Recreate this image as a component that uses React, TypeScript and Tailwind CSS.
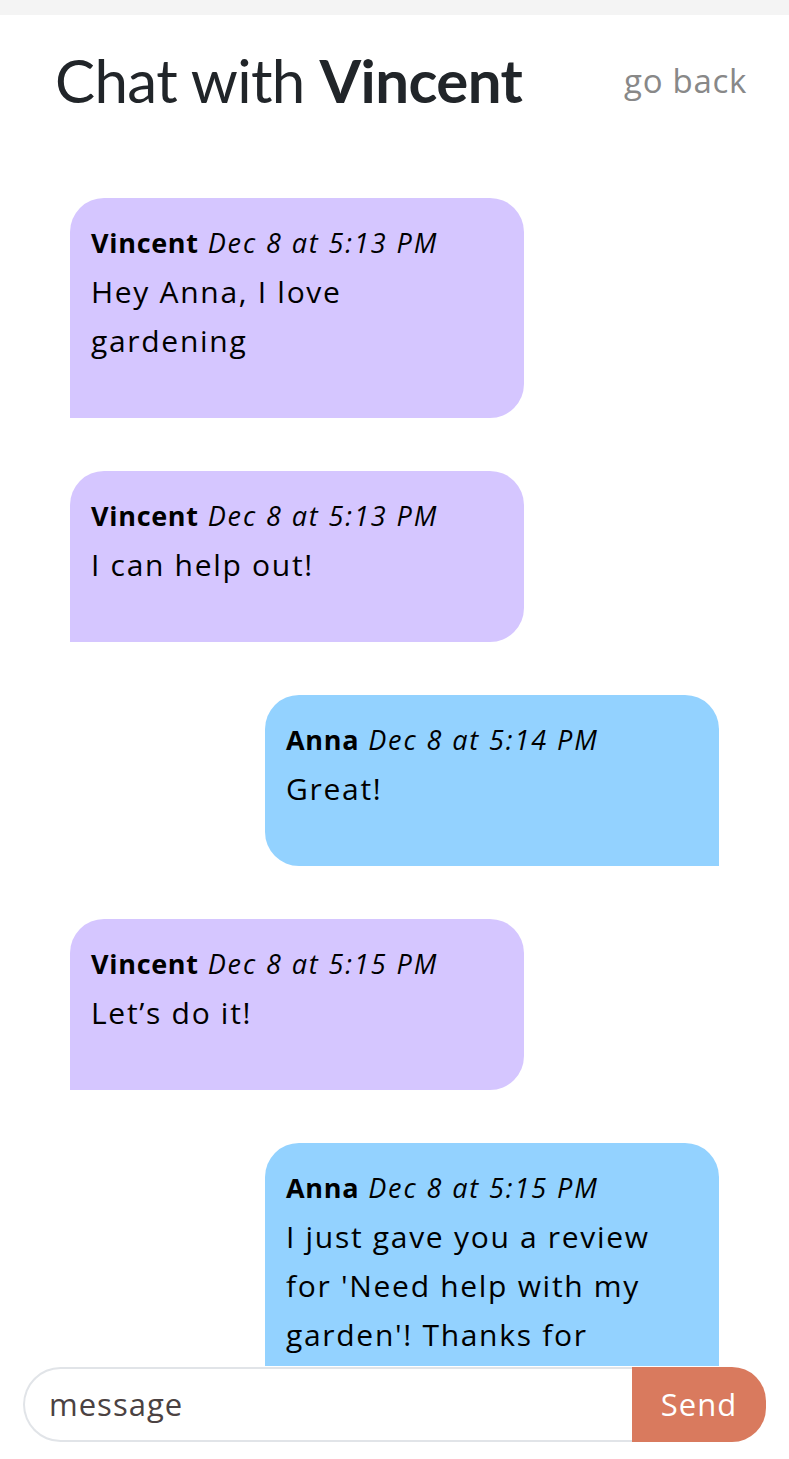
type Message = {
  author: string;
  time: string;
  text: string;
  mine: boolean;
};

const messages: Message[] = [
  { author: "Vincent", time: "Dec 8 at 5:13 PM", text: "Hey Anna, I love gardening", mine: false },
  { author: "Vincent", time: "Dec 8 at 5:13 PM", text: "I can help out!", mine: false },
  { author: "Anna", time: "Dec 8 at 5:14 PM", text: "Great!", mine: true },
  { author: "Vincent", time: "Dec 8 at 5:15 PM", text: "Let\u2019s do it!", mine: false },
  {
    author: "Anna",
    time: "Dec 8 at 5:15 PM",
    text: "I just gave you a review for 'Need help with my garden'! Thanks for everything!",
    mine: true,
  },
];

const Bubble = ({ msg }: { msg: Message }) => {
  return (
    <div
      className={
        msg.mine
          ? "self-end w-[454px] shrink-0 bg-[#93d2ff] rounded-t-[34px] rounded-bl-[34px] px-[21px] pt-[29px] pb-[53px]"
          : "self-start w-[454px] shrink-0 bg-[#d5c6ff] rounded-t-[34px] rounded-br-[34px] px-[21px] pt-[29px] pb-[53px]"
      }
    >
      <div className="text-[27px] leading-[32px] tracking-[1.9px] text-black">
        <span className="font-bold tracking-[0.7px]">{msg.author}</span>{" "}
        <span className="italic">{msg.time}</span>
      </div>
      <p className="text-[30px] leading-[49px] tracking-[1.7px] text-black mt-[8px]">{msg.text}</p>
    </div>
  );
};

export default function App() {
  return (
    <div
      className="h-screen flex flex-col bg-white overflow-hidden"
      style={{ fontFamily: "'Open Sans', sans-serif" }}
    >
      <div className="h-[15px] bg-[#f4f4f4] shrink-0" />
      <header className="h-[130px] shrink-0 flex items-center justify-between pl-[55px] pr-[42px]">
        <h1
          className="text-[60px] leading-[70px] text-[#212529] tracking-[-0.6px]"
          style={{ fontFamily: "Lato, sans-serif" }}
        >
          Chat with <span className="font-bold">Vincent</span>
        </h1>
        <a className="text-[33px] tracking-[0.7px] text-[#888888] mt-[2px]">go back</a>
      </header>

      <div className="flex-1 min-h-0 overflow-hidden flex flex-col gap-[53px] px-[70px] pt-[53px]">
        {messages.map((m, i) => (
          <Bubble key={i} msg={m} />
        ))}
      </div>

      <footer className="h-[93px] shrink-0 bg-white px-[23px] pt-[1px]">
        <div className="flex h-[75px]">
          <input
            className="flex-1 min-w-0 border-2 border-r-0 border-[#e1e4e8] rounded-l-full pl-[24px] text-[31px] tracking-[1px] text-[#4b4242] placeholder:text-[#4b4242] outline-none"
            placeholder="message"
          />
          <button className="w-[134px] bg-[#d97a5e] rounded-r-[34px] text-white text-[31px] tracking-[1px]">
            Send
          </button>
        </div>
      </footer>
    </div>
  );
}
